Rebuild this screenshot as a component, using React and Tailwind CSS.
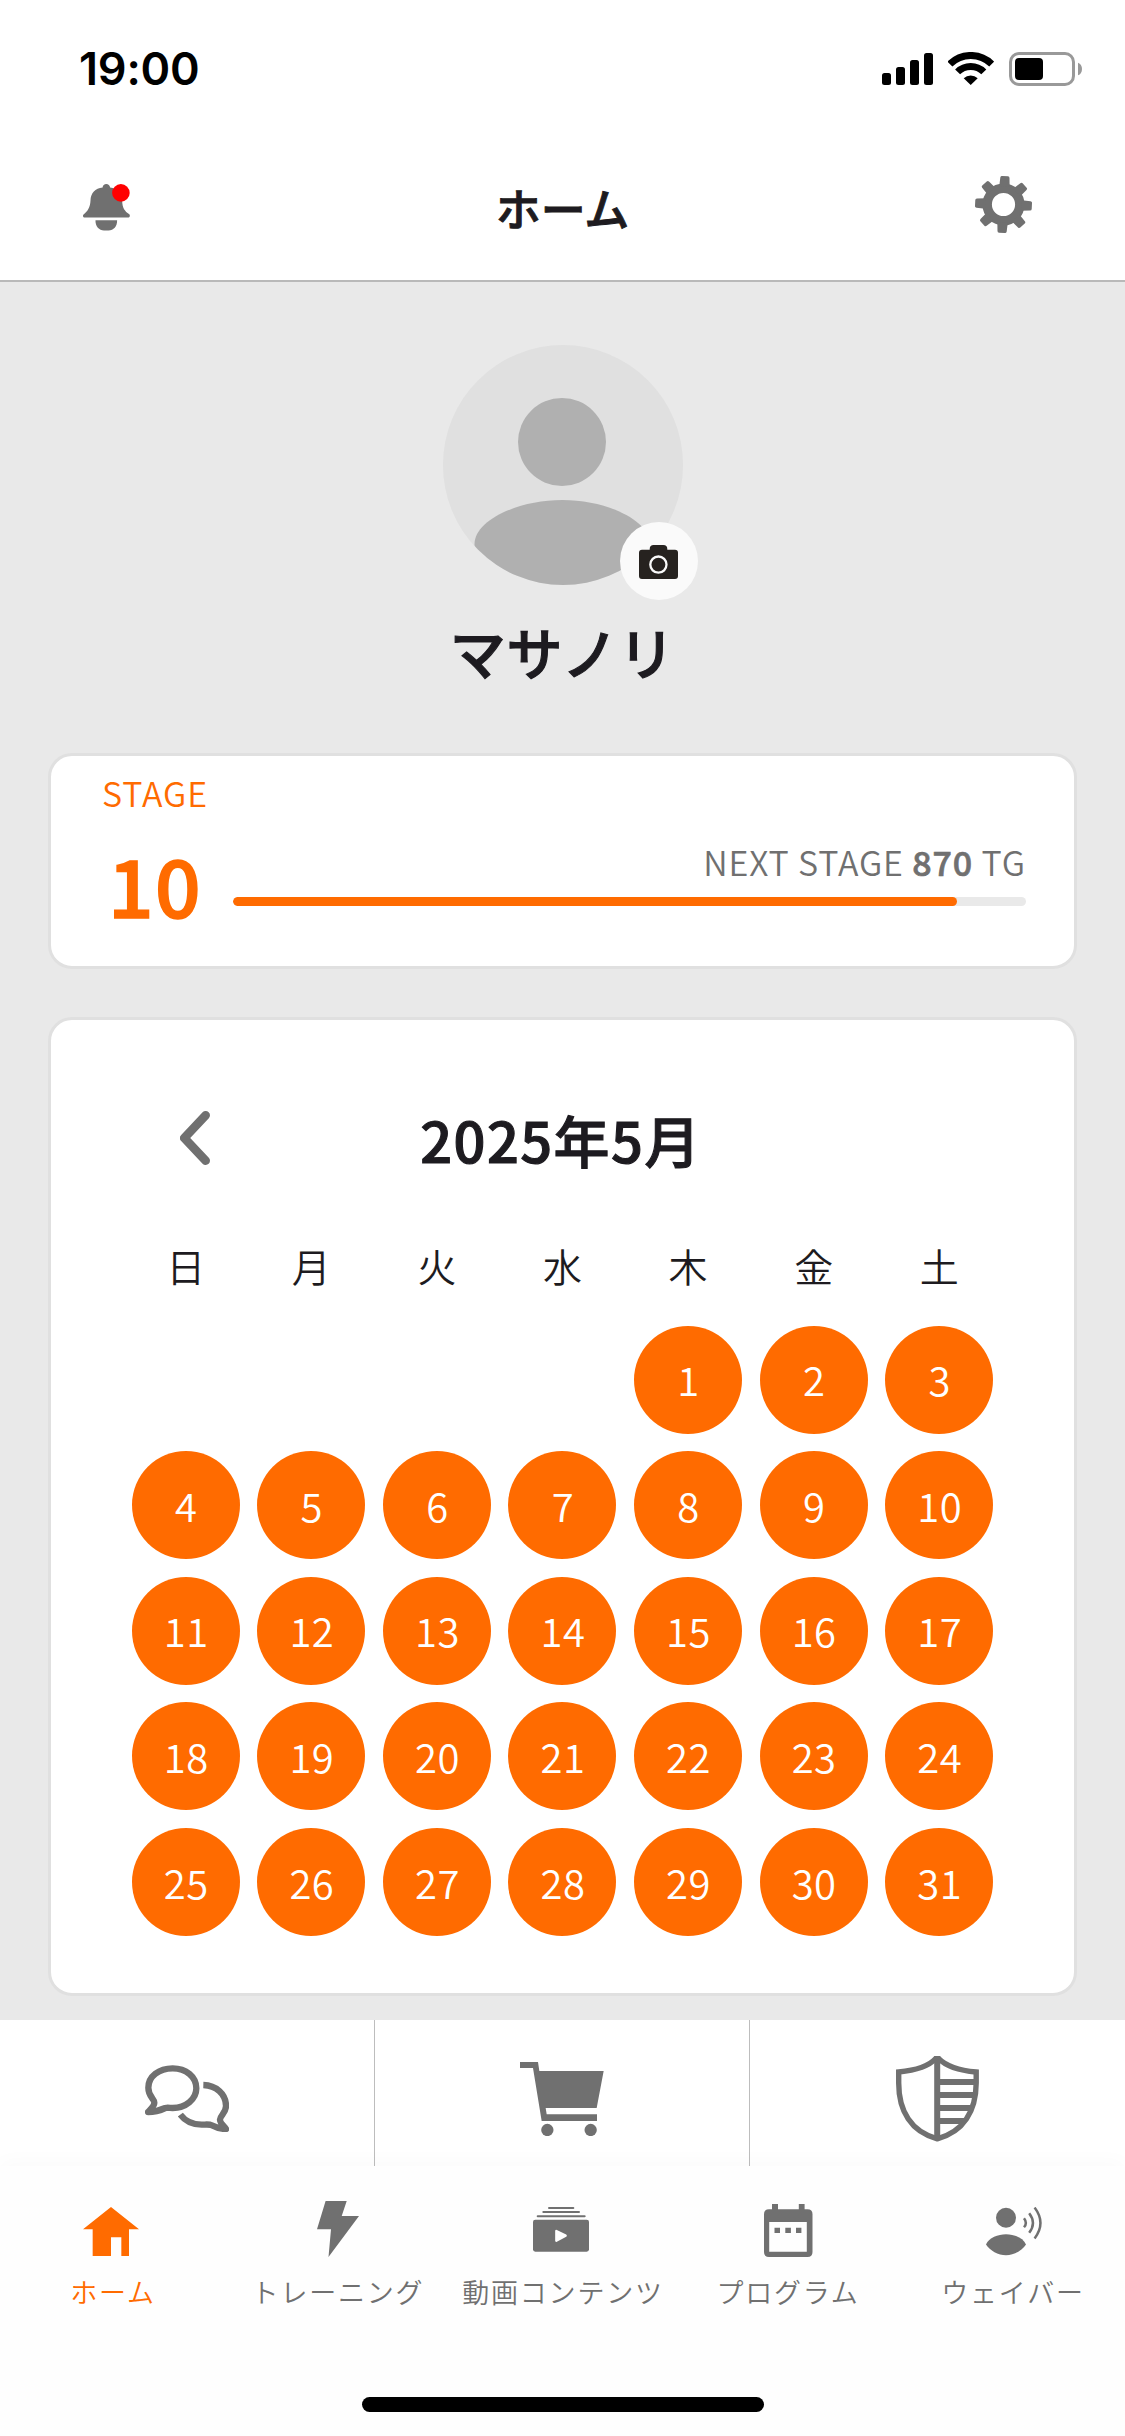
const GRAY = '#707070';

function StatusBar() {
  return (
    <div className="flex h-[138px] items-start justify-between pl-[79px] pr-[43px] pt-[52px]">
      <div className="h-[34px] font-['Inter'] text-[45px] font-semibold leading-[34px] tracking-[-0.2px] text-black">
        19:00
      </div>
      <div className="flex h-[34px]">
        <svg className="mt-px" width="51" height="32" viewBox="0 0 51 32">
          <rect x="0" y="20" width="9" height="12" rx="2.5" />
          <rect x="14" y="14" width="9" height="18" rx="2.5" />
          <rect x="28" y="7" width="9" height="25" rx="2.5" />
          <rect x="42" y="0" width="9" height="32" rx="2.5" />
        </svg>
        <svg className="ml-[15px]" width="46" height="33" viewBox="0 0 46 33">
          <path d="M1.9 12.3A29.6 29.6 0 0 1 43.7 12.3" transform="translate(0 -.2)" fill="none" stroke="#000" strokeWidth="7" />
          <path d="M9.6 19.9A18.4 18.4 0 0 1 35.8 19.9" fill="none" stroke="#000" strokeWidth="7" />
          <path d="M22.7 33L15.7 26.2A10.5 10.5 0 0 1 29.7 26.2Z" />
        </svg>
        <svg className="ml-[15px]" width="73" height="34" viewBox="0 0 73 34">
          <rect x="1.5" y="1.5" width="63" height="31" rx="8.5" fill="none" stroke="#999" strokeWidth="3" />
          <rect x="6" y="6" width="28" height="22" rx="4" />
          <path d="M69 10.7C71.5 11.5 73 14 73 17C73 20 71.500 22.500 69 23.300Z" fill="#999" />
        </svg>
      </div>
    </div>
  );
}

function BellIcon() {
  return (
    <svg width="47" height="47" viewBox="0 0 47 47" fill={GRAY}>
      <path d="M19.600 3.500C19.800 1.500 21.300 0 23.300 0C25.300 0 26.800 1.500 27.100 3.500C34.500 4.300 39.200 9 39.200 16.500C39.200 24 42 27.500 46 30C46.900 30.600 47 31.500 46.800 32.300C46.500 33.200 46 33.500 45 33.500H1.700C.8 33.500 .2 33.200 0 32.300C-.1 31.500 .1 30.700 .9 30.200C4.500 27.500 7.300 23 7.500 16.500C7.700 9 12.200 4.300 19.600 3.500Z" />
      <path d="M12.500 36.300H34.100C34.300 42.500 30.500 46.500 25.500 46.500H21C16 46.500 12.300 42.500 12.500 36.300Z" />
      <circle cx="37.900" cy="8.900" r="8.800" fill="#f00" />
    </svg>
  );
}

const TEETH = [0, 45, 90, 135, 180, 225, 270, 315];

function GearIcon() {
  return (
    <svg width="57" height="57" viewBox="-28.500 -28.500 57 57" fill={GRAY}>
      <circle r="16.300" fill="none" stroke={GRAY} strokeWidth="9.400" />
      {TEETH.map((a) => (
        <path
          key={a}
          transform={`rotate(${a + 3})`}
          d="M-5.200 -18L-4.600 -26.800Q-4.500 -28.400 -3 -28.400H3Q4.500 -28.400 4.600 -26.800L5.200 -18Z"
        />
      ))}
    </svg>
  );
}

function Header() {
  return (
    <header className="flex h-[144px] items-start justify-between border-b-2 border-[#b9b9b9] bg-white pl-[83px] pr-[93px]">
      <div className="mt-[46px] w-[67px]">
        <BellIcon />
      </div>
      <h1 className="mt-[40px] text-[45px] font-medium leading-[60px] text-[#1d1b20] [-webkit-text-stroke:0.02em]">ホーム</h1>
      <div className="mt-[38px]">
        <GearIcon />
      </div>
    </header>
  );
}

function Profile() {
  return (
    <section className="flex flex-col items-center pt-[63px]">
      <div className="relative h-[240px] w-[240px]">
        <svg width="240" height="240" viewBox="0 0 240 240">
          <clipPath id="avatar">
            <circle cx="120" cy="120" r="120" />
          </clipPath>
          <g clipPath="url(#avatar)">
            <rect width="240" height="240" fill="#e0e0e0" />
            <circle cx="119" cy="97" r="44" fill="#b0b0b0" />
            <path d="M31.500 199C31.500 176 74 155 119.300 155C164.600 155 207 176 207 199V240H31.500Z" fill="#b0b0b0" />
          </g>
        </svg>
        <div className="absolute left-[177px] top-[177px] flex h-[78px] w-[78px] items-center justify-center rounded-full bg-[#fafafa]">
          <svg className="mt-[2px]" width="39" height="34" viewBox="0 0 39 34">
            <path d="M3 4.700H10.700V4Q10.700 0 14.700 0H24.300Q28.300 0 28.300 4V4.700H36Q39 4.700 39 7.700V31Q39 34 36 34H3Q0 34 0 31V7.700Q0 4.700 3 4.700Z" fill="#26221f" />
            <circle cx="19.400" cy="19.600" r="8.100" fill="none" stroke="#fafafa" strokeWidth="2.300" />
          </svg>
        </div>
      </div>
      <h2 className="mt-[24px] text-[56px] font-medium leading-[84px] tracking-[0.6px] text-[#1d1b20] [-webkit-text-stroke:0.02em]">マサノリ</h2>
    </section>
  );
}

function StageCard() {
  return (
    <section className="mx-12 mt-[60px] h-[216px] rounded-[24px] border-[3px] border-[#e0e0e0] bg-white pl-[51px] pr-12">
      <div className="mt-[13px] text-[34px] leading-[48px] tracking-[1px] text-[#ff6b00]">STAGE</div>
      <div className="flex">
        <div className="mt-[26px] w-[131px] pl-[6px] text-[80px] font-medium leading-[80px] tracking-[1.5px] text-[#ff6b00] [-webkit-text-stroke:0.02em]">10</div>
        <div className="flex-1">
          <div className="mt-[21px] text-right text-[34px] leading-[48px] tracking-[0.9px] text-[#707070]">
            NEXT STAGE <span className="font-medium [-webkit-text-stroke:0.02em]">870</span> TG
          </div>
          <div className="mt-[11px] h-[9px] w-[793px] overflow-hidden rounded-full bg-[#e9e9e9]">
            <div className="h-full w-[724px] rounded-full bg-[#ff6b00]" />
          </div>
        </div>
      </div>
    </section>
  );
}

const WEEKDAYS = ['日', '月', '火', '水', '木', '金', '土'];
const DAYS = Array.from({ length: 31 }, (_, i) => i + 1);

function CalendarCard() {
  return (
    <section className="mx-12 mt-12 h-[979px] rounded-[24px] border-[3px] border-[#e0e0e0] bg-white px-[72px]">
      <div className="mt-[78px] grid h-[80px] grid-cols-[1fr_auto_1fr] items-center">
        <svg className="ml-[57px]" width="30" height="54" viewBox="0 0 30 54" fill="none" stroke={GRAY} strokeWidth="8.600" strokeLinecap="round" strokeLinejoin="round">
          <path d="M25.700 4.300L4.300 27L25.700 49.700" />
        </svg>
        <h2 className="mr-[3px] h-[80px] text-[56px] font-medium leading-[81px] tracking-[1.4px] text-[#1d1b20] [-webkit-text-stroke:0.02em]">
          2025年5月
        </h2>
        <span />
      </div>
      <div className="mt-[57px] grid grid-cols-7 text-center text-[39px] leading-[60px] text-[#1d1b20]">
        {WEEKDAYS.map((d) => (
          <span key={d}>{d}</span>
        ))}
      </div>
      <div className="mt-[22px] grid auto-rows-[125.570px] grid-cols-7">
        {DAYS.map((d) => (
          <div key={d} className={d === 1 ? 'col-start-5 flex items-center justify-center' : 'flex items-center justify-center'}>
            <span className="flex h-[108px] w-[108px] items-center justify-center rounded-full bg-[#ff6b00] pb-px pl-px text-[40px] leading-[60px] tracking-[0.5px] text-white">
              {d}
            </span>
          </div>
        ))}
      </div>
    </section>
  );
}

function ChatIcon() {
  return (
    <svg width="84" height="67" viewBox="255 135 252 201" fill="none" stroke={GRAY} strokeWidth="19" strokeLinejoin="round">
      <path d="M283 248C283 236 265 230 265 203C265 169 297 145 338 145C378 145 409 170 409 205C409 238 377 264 338 264C330 264 322 262 316 264C303 270 283 276 264 276C272 266 283 259 283 248Z" />
      <path d="M430 195C468 196 498 222 498 258C498 279 481 286 480 299C480 309 492 318 498 327C480 327 466 322 455 316C448 312 438 314 425 314C394 314 373 300 361 284" />
    </svg>
  );
}

function CartIcon() {
  return (
    <svg width="84" height="74" viewBox="241 126 252 222" fill={GRAY}>
      <path d="M241 126H295L299 153H492L471 264H318L321 283H472V303H306L280 144H241Z" />
      <circle cx="323" cy="330" r="18.500" />
      <circle cx="453" cy="330" r="18.500" />
    </svg>
  );
}

function ShieldIcon() {
  return (
    <svg width="83" height="86" viewBox="0 0 83 86" fill="none" stroke={GRAY}>
      <path d="M39.500 2.800H43C50 10 65 14.500 80.200 16V27C80 55 67.600 76 41.300 82.800C15 76 2.700 55 2.700 27V16C18 14.500 33 10 39.500 2.800Z" strokeWidth="5.400" />
      <path d="M41.200 4V82M41 26H80M41 39H79M41 52H74M41 65H68" strokeWidth="6" />
    </svg>
  );
}

function QuickActions() {
  return (
    <div className="mt-6 grid h-[146px] grid-cols-3 divide-x divide-[#bdbdbd] bg-white">
      <div className="flex justify-center pt-[45px]"><ChatIcon /></div>
      <div className="flex justify-center pt-[42px]"><CartIcon /></div>
      <div className="flex justify-center pt-[36px]"><ShieldIcon /></div>
    </div>
  );
}

const NAV = [
  {
    label: 'ホーム',
    active: true,
    icon: (
      <svg className="mt-[41px] mr-[3px]" width="56" height="49" viewBox="69 561 168 147" fill="#ff6b00">
        <path d="M153 561L237 628H207V708H184V652H153V708H98V628H69Z" />
      </svg>
    ),
  },
  {
    label: 'トレーニング',
    icon: (
      <svg className="mt-[35px]" width="42" height="56" viewBox="0 0 42 56" fill={GRAY}>
        <path d="M8.600 0H29.700L24.700 15H42L11.500 56L14 28.300H0Z" />
      </svg>
    ),
  },
  {
    label: '動画コンテンツ',
    icon: (
      <svg className="mt-[41px] mr-[3px]" width="56" height="45" viewBox="279 561 168 135" fill={GRAY}>
        <rect x="324" y="561" width="79" height="6" rx="3" />
        <rect x="307" y="573" width="113" height="6" rx="3" />
        <rect x="290" y="586" width="147" height="6" rx="3" />
        <rect x="279" y="599" width="168" height="96" rx="7" />
        <path d="M349 633L377 647L349 662Z" fill="#fff" stroke="#fff" strokeWidth="7" strokeLinejoin="round" />
      </svg>
    ),
  },
  {
    label: 'プログラム',
    icon: (
      <svg className="mt-[38px] ml-px" width="49" height="53" viewBox="0 0 49 53" fill={GRAY}>
        <path d="M8 0H14V5.300H34.800V0H40.600V5.300H43.500Q48.500 5.300 48.500 10.300V48Q48.500 53 43.500 53H5Q0 53 0 48V10.300Q0 5.300 5 5.300H8ZM5.200 18V47.800H42.800V18Z" />
        <path d="M10.500 23.700H16V29H10.500ZM21.300 23.700H26.900V29H21.300ZM32 23.700H37.400V29H32Z" />
      </svg>
    ),
  },
  {
    label: 'ウェイバー',
    icon: (
      <svg className="mt-[41px] ml-[4px]" width="57" height="49" viewBox="0 0 57 49" fill={GRAY}>
        <circle cx="20" cy="10.700" r="10" />
        <path d="M0 37.500C3 30.500 12 27.200 20 27.200C28 27.200 37 30.500 40 37.500C36 43.500 28 48.300 20 48.300C12 48.300 4 43.500 0 37.500Z" />
        <path d="M38 11.300Q41.700 16 38 20.300M43.200 6.200Q50.700 16 43.200 25.800M48.600 .6Q60.300 16 48.600 31.400" fill="none" stroke={GRAY} strokeWidth="2.500" />
      </svg>
    ),
  },
];

function BottomNav() {
  return (
    <nav className="h-[270px] bg-[#fefefe] shadow-[0_-6px_18px_rgba(0,0,0,0.02)]">
      <div className="grid h-[231px] grid-cols-5">
        {NAV.map(({ label, active, icon }) => (
          <div key={label} className="flex flex-col items-center">
            <div className="flex h-[106px] items-start">{icon}</div>
            <span
              className={
                active
                  ? 'ml-px whitespace-nowrap text-[27px] leading-[40px] tracking-[1.8px] text-[#ff6b00]'
                  : 'ml-px whitespace-nowrap text-[27px] leading-[40px] tracking-[1.8px] text-[#707070]'
              }
            >
              {label}
            </span>
          </div>
        ))}
      </div>
      <div className="mx-auto h-[15px] w-[402px] rounded-full bg-black" />
    </nav>
  );
}

export default function App() {
  return (
    <div className="flex h-[2436px] w-[1125px] flex-col overflow-hidden bg-white font-['Noto_Sans_CJK_JP',sans-serif] font-[350]">
      <StatusBar />
      <Header />
      <main className="h-[1884px] shrink-0 bg-[#e9e9e9]">
        <Profile />
        <StageCard />
        <CalendarCard />
        <QuickActions />
      </main>
      <BottomNav />
    </div>
  );
}
